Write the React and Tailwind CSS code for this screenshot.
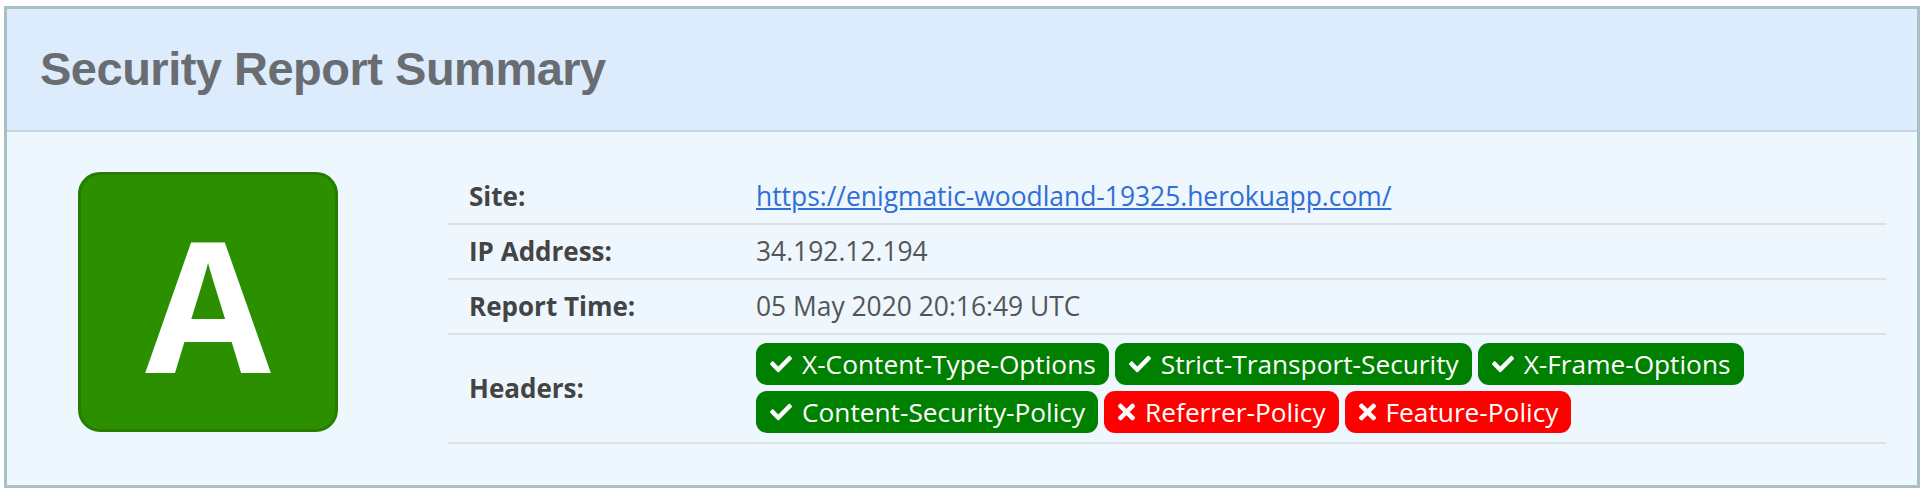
import React from 'react';
import { FaCheck, FaTimes } from 'react-icons/fa';

const report = {
  grade: 'A',
  site: 'https://enigmatic-woodland-19325.herokuapp.com/',
  ip: '34.192.12.194',
  time: '05 May 2020 20:16:49 UTC',
};

const headers = [
  { name: 'X-Content-Type-Options', ok: true },
  { name: 'Strict-Transport-Security', ok: true },
  { name: 'X-Frame-Options', ok: true },
  { name: 'Content-Security-Policy', ok: true },
  { name: 'Referrer-Policy', ok: false },
  { name: 'Feature-Policy', ok: false },
];

const HeaderBadge = ({ name, ok }) => (
  <span
    className={
      'flex items-center h-[42px] rounded-[11px] pl-[14px] pr-[13px] text-white text-[26.25px] leading-none ' +
      (ok ? 'bg-[#008000] gap-[10px]' : 'bg-[#ff0000] gap-[10px]')
    }
  >
    {ok ? <FaCheck size={22} /> : <FaTimes size={26} className="w-[17px]" />}
    <span>{name}</span>
  </span>
);

const Row = ({ label, children, badges }) => (
  <div
    className={
      'flex border-b-2 border-[#dde2e8] ' + (badges ? 'pt-2 pb-[9px]' : 'py-2')
    }
  >
    <div className="w-[308px] pl-[21px] shrink-0 flex items-center font-bold text-[#444] text-[26px] leading-[37px]">
      {label}
    </div>
    <div className="flex-1 text-[#555] text-[26.4px] leading-[37px]">{children}</div>
  </div>
);

export default function App() {
  return (
    <div className="px-[4px] pt-[6px] pb-[7px] bg-white" style={{ fontFamily: '"Open Sans", sans-serif' }}>
      <div className="border-[3px] border-[#a9c0c4]">
        {/* Заголовок */}
        <div className="h-[123px] bg-[#dcecfc] border-b-2 border-[#c5d5de] flex items-center pl-[33px]">
          <h1
            className="text-[47px] font-bold text-[#696c71] tracking-[-0.5px]"
            style={{ fontFamily: '"Liberation Sans", Arial, sans-serif' }}
          >
            Security Report Summary
          </h1>
        </div>

        {/* Тело отчёта */}
        <div className="bg-[#eef6fe] flex items-start pt-[38px] pb-[41px]">
          <div className="ml-[71px] mt-[2px] w-[260px] h-[260px] rounded-[22px] bg-[#2b8f00] border-[3px] border-[#267d00] flex items-center justify-center">
            <span className="text-white font-bold text-[182px] leading-none">{report.grade}</span>
          </div>

          <div className="ml-[110px] w-[1438px]">
            <Row label="Site:">
              <a href="#" className="text-[#2f6fd6] underline">
                {report.site}
              </a>
            </Row>
            <Row label="IP Address:">{report.ip}</Row>
            <Row label="Report Time:">{report.time}</Row>
            <Row label="Headers:" badges>
              <div className="flex flex-wrap gap-[6px]">
                {headers.map((h) => (
                  <HeaderBadge key={h.name} {...h} />
                ))}
              </div>
            </Row>
          </div>
        </div>
      </div>
    </div>
  );
}
